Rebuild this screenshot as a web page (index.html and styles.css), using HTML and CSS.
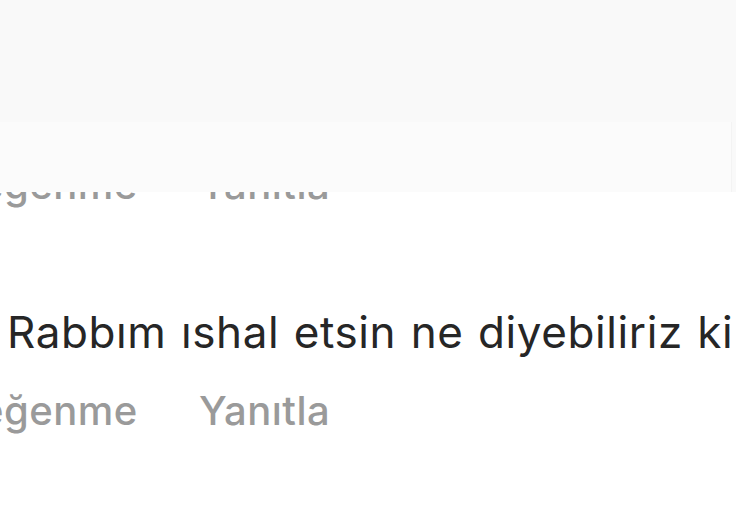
FILE: index.html
```html
<!DOCTYPE html>
<html lang="tr">
<head>
  <meta charset="UTF-8" />
  <title>Yorumlar</title>
  <meta name="viewport" content="width=device-width, initial-scale=1.0" />
  <link rel="stylesheet" href="styles.css">
</head>
<body>
  <div class="page">
    <div class="comments">
      <div class="comment comment-prev">
        <div class="actions">
          <span class="action">eğenme</span>
          <span class="action">Yanıtla</span>
        </div>
      </div>

      <div class="comment">
        <div class="comment-text">Rabbım ıshal etsin ne diyebiliriz ki</div>
        <div class="actions">
          <span class="action">eğenme</span>
          <span class="action">Yanıtla</span>
        </div>
      </div>
    </div>

    <!-- üstteki gri alan, önceki yorumun üstünü örtüyor -->
    <div class="top-cover">
      <div class="top-cover-band"></div>
    </div>
  </div>
</body>
</html>
```

FILE: styles.css
```css
:root {
  --text-color: #262626;
  --muted-color: #9a9a9a;
  --cover-bg: #f9f9f9;
  --band-bg: #fbfbfb;
}

body {
  margin: 0;
  padding: 0;
  background-color: #fff;
  font-family: 'Inter', 'Liberation Sans', sans-serif;
  color: var(--text-color);
  overflow: hidden;
}

.page {
  position: relative;
  width: 736px;
  height: 528px;
  overflow: hidden;
}

.comments {
  display: flex;
  flex-direction: column;
  padding-top: 162px;
}

.comment {
  display: flex;
  flex-direction: column;
}

.comment-prev {
  margin-bottom: 98px;
}

.comment-text {
  font-size: 44px;
  line-height: 52px;
  letter-spacing: 0.6px;
  word-spacing: 1.5px;
  padding-left: 7px;
  white-space: nowrap;
  margin-bottom: 30px;
}

.actions {
  display: flex;
  gap: 61px;
  margin-left: -20px;
  font-size: 40px;
  line-height: 46px;
  letter-spacing: 0.5px;
  color: var(--muted-color);
  font-weight: 500;
  white-space: nowrap;
}

.top-cover {
  position: absolute;
  top: 0;
  left: 0;
  right: 0;
  height: 192px;
  background-color: var(--cover-bg);
  display: flex;
  flex-direction: column;
  justify-content: flex-end;
}

.top-cover-band {
  height: 70px;
  margin-right: 4px;
  background-color: var(--band-bg);
  border-right: 1px solid #f3f3f3;
}
```
